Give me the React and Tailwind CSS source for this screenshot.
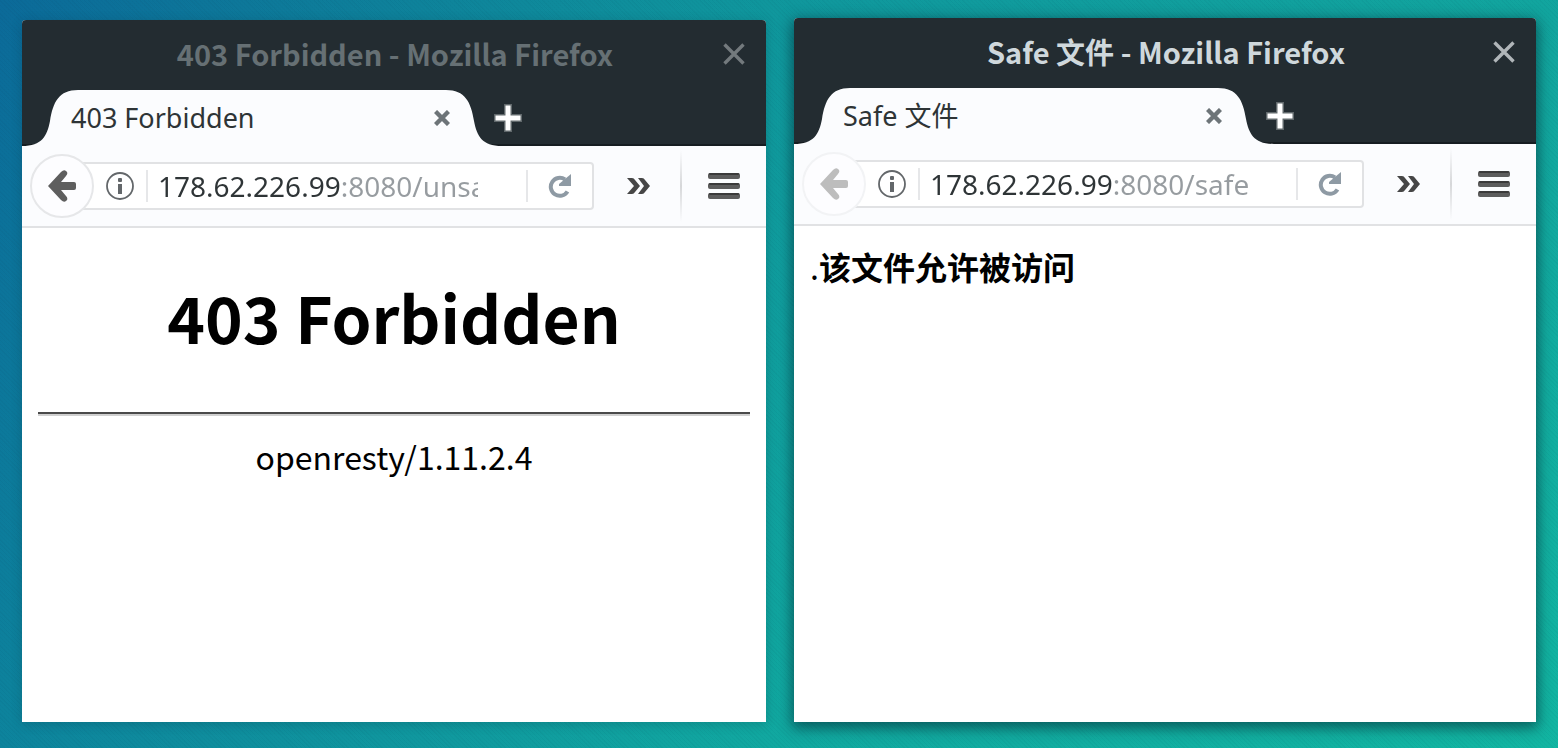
import clsx from 'clsx';

const TabCap = ({ flip }) => (
  <svg
    className={clsx('w-14 h-14 shrink-0', flip && '-scale-x-100')}
    viewBox="0 0 56 56"
    fill="#fbfcfe"
    aria-hidden="true"
  >
    <path d="M0 56 C20 56 25 46 28 31 C31 12 37 0 56 0 V56 Z" />
  </svg>
);

const BackIcon = () => (
  <svg className="w-7 h-8" viewBox="0 0 28 32" fill="currentColor" aria-hidden="true">
    <path d="M0 16 L13 2 Q16 -1 18 1 L19 2 Q20 4 18 6 L13 12 H26 Q28 12 28 14 V18 Q28 20 26 20 H13 L18 26 Q20 28 19 30 L18 31 Q16 33 13 30 Z" />
  </svg>
);

const InfoIcon = () => (
  <svg className="w-7 h-7 shrink-0" viewBox="0 0 28 28" fill="#63676a" aria-hidden="true">
    <circle cx="14" cy="14" r="13" fill="none" stroke="#63676a" strokeWidth="1.8" />
    <rect x="12" y="6" width="4" height="4" rx="1" />
    <rect x="12" y="12" width="4" height="10" />
  </svg>
);

const ReloadIcon = () => (
  <svg className="w-6 h-6" viewBox="0 0 24 24" aria-hidden="true">
    <path d="M19.5 17.5 A9 9 0 1 1 17 5.5" fill="none" stroke="#8e9aa4" strokeWidth="4" />
    <path d="M23 0 V12 H11 V10 Z" fill="#8e9aa4" />
  </svg>
);

const ChevronsIcon = () => (
  <svg className="w-6 h-4" viewBox="0 0 24 16" fill="#464646" aria-hidden="true">
    <path d="M0 0 H5 Q7 0 8 2 L13 8 L8 14 Q7 16 5 16 H0 L7 8 Z" />
    <path d="M11 0 H15 Q17 0 18 2 L23 8 L18 14 Q17 16 15 16 H11 L17 8 Z" />
  </svg>
);

const MenuIcon = () => (
  <svg className="w-8 h-[26px]" viewBox="0 0 32 26" aria-hidden="true">
    {[0, 10, 20].map((y) => (
      <g key={y}>
        <rect y={y} width="32" height="6" rx="2" fill="#5c5c5c" />
        <rect x="1" y={y} width="30" height="2" rx="1" fill="#3a3a3a" />
      </g>
    ))}
  </svg>
);

const BrowserWindow = ({ title, tab, host, path, active, canGoBack, children }) => (
  <section
    className={clsx(
      'flex flex-col min-w-0 rounded-t-sm bg-white',
      active
        ? 'mt-[18px] shadow-[0_4px_14px_2px_rgba(0,30,40,0.55)]'
        : 'mt-5 shadow-[0_2px_12px_rgba(0,30,40,0.2)]'
    )}
  >
    {/* Title bar */}
    <header className="bg-[#232c31] rounded-t-sm">
      <div className="flex items-center h-[70px] pl-[46px] pr-5">
        <h2
          className={clsx(
            'flex-1 pb-1 text-center text-[29px] leading-[40px] font-bold whitespace-nowrap',
            active ? 'text-[#cfd8dc]' : 'text-[#667074]'
          )}
        >
          {title}
        </h2>
        <button
          type="button"
          aria-label="Close window"
          className={clsx('p-px pb-1', active ? 'text-[#b0b6b9]' : 'text-[#737a7d]')}
        >
          <svg className="w-[22px] h-[22px]" viewBox="0 0 22 22" fill="none" stroke="currentColor" strokeWidth="3.4">
            <path d="M1.5 1.5 L20.5 20.5 M20.5 1.5 L1.5 20.5" />
          </svg>
        </button>
      </div>

      {/* Tab strip */}
      <div className="flex items-end h-14 shadow-[inset_0_-2px_0_#161d21]">
        <div className="flex w-[480px] h-14">
          <TabCap />
          <div className="flex flex-1 items-center justify-between bg-[#fbfcfe]">
            <span className="-ml-[7px] font-['Noto_Sans','Noto_Sans_CJK_SC',sans-serif] text-[27px] leading-[40px] text-[#2e3436] whitespace-nowrap">
              {tab}
            </span>
            <button type="button" aria-label="Close tab" className="z-10 -mr-1">
              <svg className="w-4 h-4" viewBox="0 0 16 16" fill="none" stroke="#6d7478" strokeWidth="4.4">
                <path d="M1.5 1.5 L14.5 14.5 M14.5 1.5 L1.5 14.5" />
              </svg>
            </button>
          </div>
          <TabCap flip />
        </div>
        <button type="button" aria-label="New tab" className="self-center -ml-2">
          <svg className="w-7 h-7" viewBox="0 0 28 28">
            <path d="M10 0 H18 V10 H28 V18 H18 V28 H10 V18 H0 V10 H10 Z" fill="#60686b" />
            <path d="M11.5 1.5 H16.5 V11.5 H26.5 V16.5 H16.5 V26.5 H11.5 V16.5 H1.5 V11.5 H11.5 Z" fill="#fff" />
          </svg>
        </button>
      </div>
    </header>

    {/* Navigation bar */}
    <nav className="flex items-center h-[82px] pl-2 pr-[26px] bg-[#fbfcfe] border-b-2 border-[#e1e2e4] font-['Noto_Sans','Noto_Sans_CJK_SC',sans-serif]">
      <button
        type="button"
        aria-label="Back"
        disabled={!canGoBack}
        className={clsx(
          'z-10 flex items-center justify-center w-16 h-16 shrink-0 rounded-full border-2 bg-[#fdfdff]',
          canGoBack ? 'border-[#e6e7e9] text-[#5e5e5e]' : 'border-[#f2f3f5] text-[#bdbdbd]'
        )}
      >
        <BackIcon />
      </button>
      <div className="flex flex-1 items-center min-w-0 h-12 -ml-3 pl-6 border-2 border-l-0 border-[#e1e2e4] rounded-r-sm bg-white">
        <InfoIcon />
        <div className="w-0.5 h-8 ml-3 mr-[10px] bg-[#e6e7e9]" />
        <input
          type="text"
          aria-label="Address"
          defaultValue={`${host}${path}`}
          className="flex-1 min-w-0 mr-12 bg-[linear-gradient(to_right,#2e3436_183px,#979ca0_183px)] bg-clip-text text-[28px] leading-[40px] text-transparent outline-none"
        />
        <div className="w-0.5 h-8 bg-[#e6e7e9]" />
        <button type="button" aria-label="Reload" className="px-5">
          <ReloadIcon />
        </button>
      </div>
      <button type="button" aria-label="More tools" className="ml-[33px] mr-[29px]">
        <ChevronsIcon />
      </button>
      <div className="w-0.5 h-[72px] mr-[26px] bg-linear-to-b from-transparent via-[#d6d7d9] to-transparent" />
      <button type="button" aria-label="Open menu">
        <MenuIcon />
      </button>
    </nav>

    {/* Page */}
    <div className="flex-1 px-4 text-black">{children}</div>
  </section>
);

const App = () => {
  return (
    <main className="grid grid-cols-[744fr_742fr] gap-7 min-h-screen px-[22px] pb-[26px] font-['Noto_Sans_CJK_SC',sans-serif] bg-[repeating-linear-gradient(45deg,rgba(0,40,60,0.04)_0_1px,transparent_1px_3px),linear-gradient(to_bottom_right,transparent,rgba(20,220,170,0.45)),linear-gradient(to_right,#0b6a99_0%,#0d7499_16%,#0f8e9b_50%,#11959b_100%)]">
      <BrowserWindow
        title="403 Forbidden - Mozilla Firefox"
        tab="403 Forbidden"
        host="178.62.226.99"
        path=":8080/unsafe"
        canGoBack
      >
        <h1 className="pt-10 text-center text-[64px] leading-[96px] font-bold">403 Forbidden</h1>
        <hr className="mt-12 border-t-2 border-[#4a4a4a] shadow-[0_2px_0_#d0d0d0]" />
        <p className="mt-[18px] text-center text-[32px] leading-[48px]">openresty/1.11.2.4</p>
      </BrowserWindow>

      <BrowserWindow
        title="Safe 文件 - Mozilla Firefox"
        tab="Safe 文件"
        host="178.62.226.99"
        path=":8080/safe"
        active
      >
        <p className="pt-4 text-[32px] leading-[48px] font-bold">
          <span className="font-normal">.</span>该文件允许被访问
        </p>
      </BrowserWindow>
    </main>
  );
};

export default App;
